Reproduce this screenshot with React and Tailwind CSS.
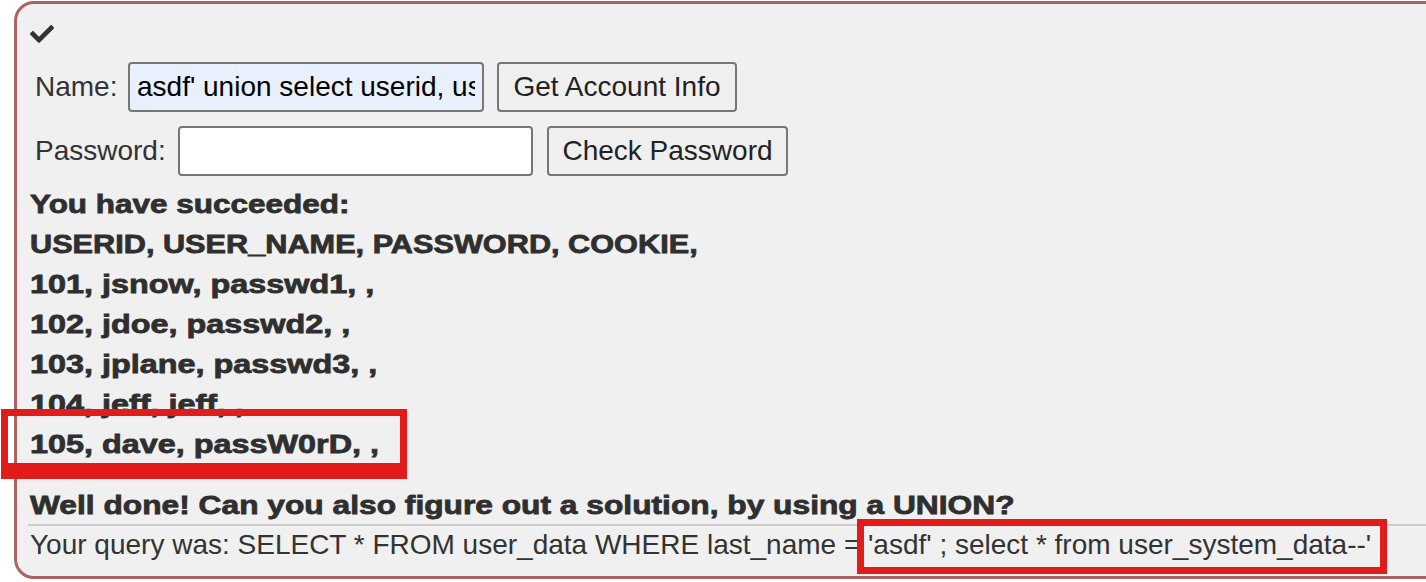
import { FaCheck } from "react-icons/fa";

const rows = [
  "101, jsnow, passwd1, ,",
  "102, jdoe, passwd2, ,",
  "103, jplane, passwd3, ,",
  "104, jeff, jeff, ,",
  "105, dave, passW0rD, ,",
];

const App = () => {
  return (
    <div className="relative w-[1426px] h-[582px] overflow-hidden bg-white font-['Liberation_Sans',Arial,sans-serif] text-[#333333]">
      {/* Assignment panel */}
      <div className="ml-[14px] mt-px w-[1460px] h-[578px] border-[3px] border-[#a86464] rounded-[20px] bg-[#f0f0f0] pl-[13px] pt-[18px]">
        <FaCheck className="block w-[24px] h-[24px] text-[#333333]" />

        {/* Name row */}
        <div className="flex items-center h-[50px] mt-[16px] text-[28px]">
          <span className="w-[98px] pl-[5px] shrink-0">Name:</span>
          <input
            readOnly
            value="asdf' union select userid, user_name, password, cookie, null, null, null from user_system_data--"
            className="w-[356px] h-[50px] px-[7px] bg-[#e8f0fe] border-2 border-[#767676] rounded-[4px] text-black text-[28px] outline-none"
          />
          <button className="ml-[13px] w-[240px] h-[50px] bg-[#efefef] border-2 border-[#767676] rounded-[4px] text-[28px] text-[#222222]">
            Get Account Info
          </button>
        </div>

        {/* Password row */}
        <div className="flex items-center h-[50px] mt-[14px] text-[28px]">
          <span className="w-[148px] pl-[5px] shrink-0">Password:</span>
          <input
            type="password"
            readOnly
            value=""
            className="w-[355px] h-[50px] px-[7px] bg-white border-2 border-[#767676] rounded-[4px] text-[28px] outline-none"
          />
          <button className="ml-[14px] w-[241px] h-[50px] bg-[#efefef] border-2 border-[#767676] rounded-[4px] text-[28px] text-[#222222]">
            Check Password
          </button>
        </div>

        {/* Feedback */}
        <div className="mt-[8px] font-bold text-[26px] text-[#2f2f2f] [-webkit-text-stroke:0.8px_#2f2f2f]">
          <div className="h-[40px] leading-[40px] whitespace-nowrap origin-left scale-x-[1.21]">
            You have succeeded:
          </div>
          <div className="h-[40px] leading-[40px] whitespace-nowrap origin-left scale-x-[1.18]">
            USERID, USER_NAME, PASSWORD, COOKIE,
          </div>
          {rows.map((r) => (
            <div key={r} className="h-[40px] leading-[40px] whitespace-nowrap origin-left scale-x-[1.245]">
              {r}
            </div>
          ))}
          <div className="mt-[22px] h-[38px] leading-[38px] whitespace-nowrap origin-left scale-x-[1.22]">
            Well done! Can you also figure out a solution, by using a UNION?
          </div>
        </div>
        <div className="h-[2px] bg-[#cccccc] -ml-[2px]" />
        <div className="mt-[3px] leading-[32px] text-[28px] whitespace-nowrap">
          Your query was: SELECT * FROM user_data WHERE last_name = 'asdf' ; select * from user_system_data--'
        </div>
      </div>

      {/* Red annotation boxes */}
      <div className="absolute left-[1px] top-[409px] w-[406px] h-[70px] border-[7px] border-b-[16px] border-[#e21b1b]" />
      <div className="absolute left-[857px] top-[519px] w-[530px] h-[55px] border-[7px] border-[#e21b1b]" />
    </div>
  );
};

export default App;
